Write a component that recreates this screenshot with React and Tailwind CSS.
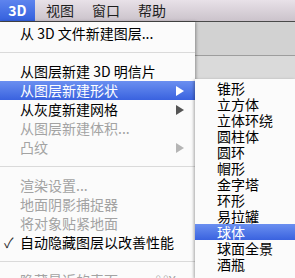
import React from "react";

const font = { fontFamily: '"Noto Sans CJK SC", "Noto Sans", sans-serif' };

function Arrow({ color }) {
  return (
    <svg width="8" height="10" viewBox="0 0 8 10" className="shrink-0">
      <path d="M0 0 L8 5 L0 10 Z" fill={color} />
    </svg>
  );
}

function Item({ children, disabled, arrow, active, check, shortcut }) {
  const text = active ? "text-white" : disabled ? "text-[#a3a3a3]" : "text-black";
  return (
    <div
      className={
        "relative h-[19px] flex items-center pl-[20px] pr-[11px] text-[14px] leading-[19px] " +
        text +
        (active ? " bg-linear-to-b from-[#6b8ff0] to-[#3a62df]" : "")
      }
    >
      {check && <span className="absolute left-[4px] text-[#333] text-[14px]">✓</span>}
      <span className="flex-1 whitespace-nowrap">{children}</span>
      {shortcut && <span className="text-[13px] text-[#a3a3a3] mr-[8px]">{shortcut}</span>}
      {arrow && <Arrow color={active ? "#ffffff" : disabled ? "#b5b5b5" : "#555555"} />}
    </div>
  );
}

function Sep() {
  return (
    <div className="h-[19px] flex items-center">
      <div className="h-px w-full bg-[#dadada]" />
    </div>
  );
}

function Sub({ children, active }) {
  return (
    <div
      className={
        "h-[16px] flex items-center pl-[22px] text-[14px] leading-[16px] whitespace-nowrap " +
        (active ? "text-white bg-linear-to-b from-[#6b8ff0] to-[#3a62df]" : "text-black")
      }
    >
      {children}
    </div>
  );
}

export default function App() {
  return (
    <div className="w-[295px] h-[278px] overflow-hidden bg-[#d6d6d6] flex flex-col" style={font}>
      <div className="h-[22px] shrink-0 flex items-stretch bg-linear-to-b from-[#e8e1e8] to-[#cbc3cb] border-b border-[#4a4a4a] text-[14px] text-[#1e1e1e]">
        <div className="w-[35px] flex items-center justify-center font-bold text-white bg-linear-to-b from-[#5e84ee] to-[#3460dd]">
          3D
        </div>
        <div className="ml-[11px] w-[46px] flex items-center">视图</div>
        <div className="w-[46px] flex items-center">窗口</div>
        <div className="flex items-center">帮助</div>
      </div>
      <div className="flex flex-1 min-h-0">
        <div className="w-[195px] shrink-0 bg-[#fbfbfb] pt-[2px] shadow-[1px_0_3px_rgba(0,0,0,0.35)] z-10">
          <Item>从 3D 文件新建图层...</Item>
          <Sep />
          <Item>从图层新建 3D 明信片</Item>
          <Item active arrow>从图层新建形状</Item>
          <Item arrow>从灰度新建网格</Item>
          <Item disabled>从图层新建体积...</Item>
          <Item disabled arrow>凸纹</Item>
          <Sep />
          <Item disabled>渲染设置...</Item>
          <Item disabled>地面阴影捕捉器</Item>
          <Item disabled>将对象贴紧地面</Item>
          <Item check>自动隐藏图层以改善性能</Item>
          <Sep />
          <Item disabled shortcut="⌥⌘X">隐藏最近的表面</Item>
        </div>
        <div className="flex-1 flex flex-col">
          <div className="h-[57px] shrink-0 flex flex-col">
            <div className="h-[33px] bg-[#d2d2d2]" />
            <div className="h-px bg-[#9d9d9d]" />
            <div className="flex-1 bg-[#dadada]" />
          </div>
          <div className="flex-1 bg-[#fbfbfb] pt-[1px] shadow-[-1px_1px_3px_rgba(0,0,0,0.35)] z-20">
            <Sub>锥形</Sub>
            <Sub>立方体</Sub>
            <Sub>立体环绕</Sub>
            <Sub>圆柱体</Sub>
            <Sub>圆环</Sub>
            <Sub>帽形</Sub>
            <Sub>金字塔</Sub>
            <Sub>环形</Sub>
            <Sub>易拉罐</Sub>
            <Sub active>球体</Sub>
            <Sub>球面全景</Sub>
            <Sub>酒瓶</Sub>
          </div>
        </div>
      </div>
    </div>
  );
}
